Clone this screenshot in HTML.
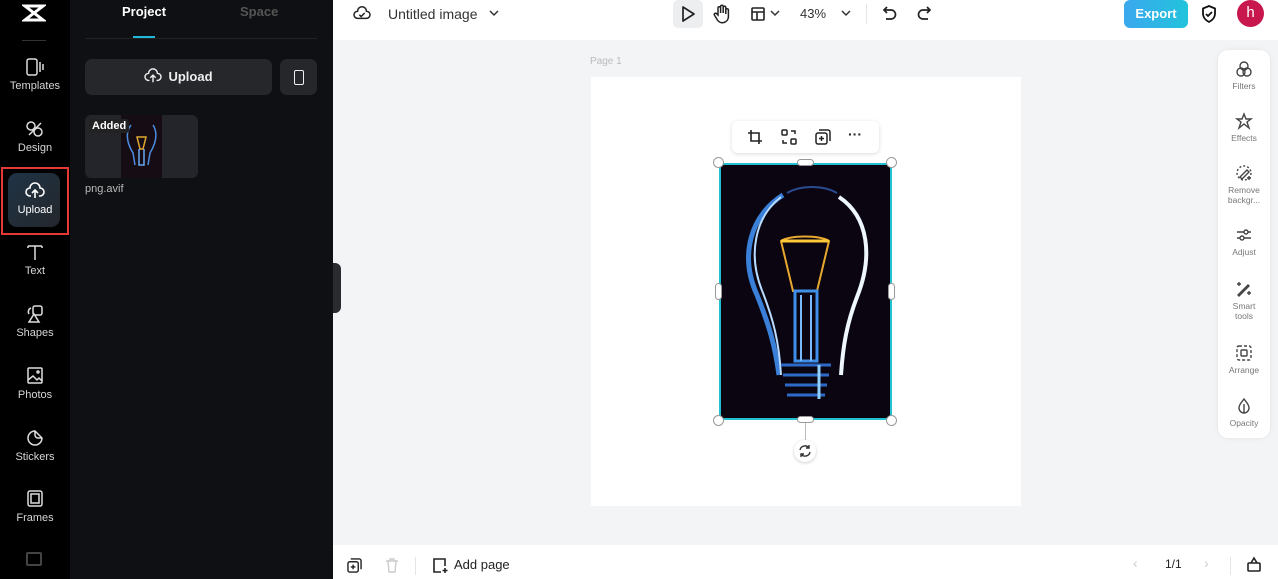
<!DOCTYPE html>
<html><head><meta charset="utf-8"><style>
*{box-sizing:border-box;margin:0;padding:0}
body{width:1278px;height:579px;overflow:hidden;font-family:"Liberation Sans",sans-serif;background:#f3f4f5;position:relative}
.rail{position:absolute;left:0;top:0;width:70px;height:579px;background:#000}
.panel{position:absolute;left:70px;top:0;width:263px;height:579px;background:#0f1013}
.ri{position:absolute;left:0;width:70px;text-align:center;color:#d6d6d8;font-size:11px}
.ri svg{display:block;margin:0 auto 4px}
.top{position:absolute;left:333px;top:0;right:0;height:40px;background:#fff}
.bot{position:absolute;left:333px;bottom:0;right:0;height:34px;background:#fff}
.rp{position:absolute;left:1218px;top:50px;width:52px;height:388px;background:#fff;border-radius:10px;box-shadow:0 0 4px rgba(0,0,0,.08)}
.rp div{position:absolute;left:0;width:52px;text-align:center;color:#777;font-size:8.5px;line-height:10px}
.rp svg{display:block;margin:0 auto 3px}
.h{position:absolute;width:11px;height:11px;border-radius:50%;background:#fff;border:1px solid #999}
</style></head><body>
<div class="rail">
 <svg style="position:absolute;left:22px;top:4px" width="24" height="18" viewBox="0 0 24 18"><path d="M3 2h18l-9 7zM3 16h18l-9-7z" fill="none" stroke="#fff" stroke-width="3"/></svg>
 <div style="position:absolute;left:22px;top:40px;width:24px;height:1px;background:#333"></div>
 <div class="ri" style="top:58px"><svg width="20" height="18" viewBox="0 0 20 18" fill="none" stroke="#ddd" stroke-width="1.5"><rect x="2" y="1" width="10" height="16" rx="2"/><path d="M15 4v10M18 6v6"/></svg>Templates</div>
 <div class="ri" style="top:120px"><svg width="20" height="18" viewBox="0 0 20 18" fill="none" stroke="#ddd" stroke-width="1.5"><circle cx="6" cy="6" r="4"/><circle cx="13" cy="12" r="4"/><path d="M4 15l12-12"/></svg>Design</div>
 <div style="position:absolute;left:1px;top:167px;width:68px;height:68px;border:2px solid #e53935"></div>
 <div style="position:absolute;left:8px;top:173px;width:52px;height:54px;border-radius:9px;background:linear-gradient(135deg,#1f3345,#24272c)"></div>
 <div class="ri" style="top:182px;color:#fff"><svg width="20" height="18" viewBox="0 0 20 18" fill="none" stroke="#fff" stroke-width="1.6"><path d="M6 14H5a4 4 0 0 1 0-8 5 5 0 0 1 10 0 4 4 0 0 1 0 8h-1M10 16V9M7 11l3-3 3 3"/></svg>Upload</div>
 <div class="ri" style="top:243px"><svg width="20" height="18" viewBox="0 0 20 18" fill="none" stroke="#ddd" stroke-width="1.5"><path d="M3 3h14M10 3v14M3 3v2M17 3v2"/></svg>Text</div>
 <div class="ri" style="top:305px"><svg width="20" height="18" viewBox="0 0 20 18" fill="none" stroke="#ddd" stroke-width="1.5"><rect x="8" y="1" width="9" height="9" rx="2"/><path d="M9 9l-5 8h10z"/><path d="M6 3a4 4 0 0 0-2 6"/></svg>Shapes</div>
 <div class="ri" style="top:367px"><svg width="20" height="18" viewBox="0 0 20 18" fill="none" stroke="#ddd" stroke-width="1.5"><rect x="3" y="1" width="14" height="15" rx="1"/><path d="M3 13l5-4 4 4 2-2 3 3"/><circle cx="13" cy="5" r="1"/></svg>Photos</div>
 <div class="ri" style="top:429px"><svg width="20" height="18" viewBox="0 0 20 18" fill="none" stroke="#ddd" stroke-width="1.5"><path d="M17 9A7 7 0 1 1 10 2l7 7zM10 2v4a3 3 0 0 0 3 3h4"/></svg>Stickers</div>
 <div class="ri" style="top:490px"><svg width="20" height="18" viewBox="0 0 20 18" fill="none" stroke="#ddd" stroke-width="1.5"><rect x="3" y="1" width="14" height="15" rx="2"/><rect x="6" y="4" width="8" height="9"/></svg>Frames</div>
 <div style="position:absolute;left:26px;top:552px;width:16px;height:14px;border:2px solid #444;border-radius:2px"></div>
</div>
<div class="panel">
 <div style="position:absolute;left:52px;top:4px;color:#fff;font-weight:bold;font-size:13px">Project</div>
 <div style="position:absolute;left:170px;top:4px;color:#555;font-weight:bold;font-size:13px">Space</div>
 <div style="position:absolute;left:63px;top:36px;width:22px;height:3px;background:#22b8d8"></div>
 <div style="position:absolute;left:15px;top:38px;width:232px;height:1px;background:#222"></div>
 <div style="position:absolute;left:15px;top:59px;width:187px;height:36px;border-radius:7px;background:#26272b;color:#eee;font-weight:bold;font-size:13px;line-height:36px;text-align:center"><svg style="vertical-align:-3px;margin-right:6px" width="18" height="16" viewBox="0 0 20 18" fill="none" stroke="#eee" stroke-width="1.6"><path d="M6 14H5a4 4 0 0 1 0-8 5 5 0 0 1 10 0 4 4 0 0 1 0 8h-1M10 16V9M7 11l3-3 3 3"/></svg>Upload</div>
 <div style="position:absolute;left:210px;top:59px;width:37px;height:36px;border-radius:7px;background:#26272b"><div style="position:absolute;left:14px;top:11px;width:10px;height:15px;border:1.5px solid #eee;border-radius:2px"></div></div>
 <div style="position:absolute;left:15px;top:115px;width:113px;height:63px;border-radius:6px;background:#24252a;overflow:hidden"><div style="position:absolute;left:36px;top:0;width:41px;height:63px;background:#150c14"></div>
 <svg style="position:absolute;left:36px;top:0" width="41" height="63" viewBox="0 0 41 63" fill="none" stroke="#4c8de0" stroke-width="1.5"><path d="M10 10C4 18 6 28 12 38l2 12M32 10c5 8 3 18-3 28l-2 12"/><path d="M16 22h9l-3 12h-3z" stroke="#e0a830"/><path d="M18 34v16h5V34" stroke="#69a8f0"/></svg>
 <div style="position:absolute;left:4px;top:4px;background:#222;color:#fff;font-weight:bold;font-size:11px;padding:1px 3px;border-radius:3px">Added</div></div>
 <div style="position:absolute;left:15px;top:183px;color:#bbb;font-size:11px">png.avif</div>
</div>
<div style="position:absolute;left:333px;top:263px;width:8px;height:50px;background:#2a2b2e;border-radius:0 6px 6px 0"></div>
<div class="top">
 <svg style="position:absolute;left:20px;top:5px" width="18" height="16" viewBox="0 0 20 18" fill="none" stroke="#222" stroke-width="1.7"><path d="M6 15H5a4 4 0 0 1 0-8 5 5 0 0 1 10 0 4 4 0 0 1 0 8H6M7 11l2 2 4-4"/></svg>
 <div style="position:absolute;left:55px;top:6px;font-size:14px;color:#333">Untitled image</div>
 <svg style="position:absolute;left:156px;top:9px" width="10" height="8" viewBox="0 0 10 8"><path d="M1 2l4 4 4-4" fill="none" stroke="#333" stroke-width="1.5"/></svg>
 <div style="position:absolute;left:340px;top:0;width:30px;height:28px;background:#eceef0;border-radius:5px"></div>
 <svg style="position:absolute;left:347px;top:5px" width="16" height="18" viewBox="0 0 16 18"><path d="M3 2l11 7-11 7z" fill="none" stroke="#222" stroke-width="1.7" stroke-linejoin="round"/></svg>
 <svg style="position:absolute;left:380px;top:4px" width="18" height="20" viewBox="0 0 18 20" fill="none" stroke="#222" stroke-width="1.5"><path d="M5 11V4a1.3 1.3 0 0 1 2.6 0v5V2.5a1.3 1.3 0 0 1 2.6 0V9V3.5a1.3 1.3 0 0 1 2.6 0V10V6a1.3 1.3 0 0 1 2.6 0v7a6 6 0 0 1-11 3l-3-5a1.3 1.3 0 0 1 2.3-1.2z"/></svg>
 <svg style="position:absolute;left:417px;top:6px" width="16" height="16" viewBox="0 0 16 16" fill="none" stroke="#222" stroke-width="1.6"><rect x="2" y="2" width="12" height="12" rx="1"/><path d="M2 6h12M7 6v8"/></svg>
 <svg style="position:absolute;left:437px;top:9px" width="10" height="8" viewBox="0 0 10 8"><path d="M1 2l4 4 4-4" fill="none" stroke="#333" stroke-width="1.5"/></svg>
 <div style="position:absolute;left:467px;top:6px;font-size:13px;color:#333">43%</div>
 <svg style="position:absolute;left:508px;top:9px" width="10" height="8" viewBox="0 0 10 8"><path d="M1 2l4 4 4-4" fill="none" stroke="#333" stroke-width="1.5"/></svg>
 <div style="position:absolute;left:533px;top:4px;width:1px;height:20px;background:#e5e5e5"></div>
 <svg style="position:absolute;left:549px;top:5px" width="16" height="18" viewBox="0 0 16 18" fill="none" stroke="#222" stroke-width="1.7"><path d="M5 2L2 5l3 3M2 5h7a4.5 4.5 0 0 1 0 9H4"/></svg>
 <svg style="position:absolute;left:583px;top:5px" width="16" height="18" viewBox="0 0 16 18" fill="none" stroke="#222" stroke-width="1.7"><path d="M11 2l3 3-3 3M14 5H7a4.5 4.5 0 0 0 0 9h5"/></svg>
 <div style="position:absolute;left:791px;top:0;width:64px;height:28px;border-radius:6px;background:linear-gradient(90deg,#3aa8ee,#22c3dc);color:#fff;font-weight:bold;font-size:13px;line-height:28px;text-align:center">Export</div>
 <svg style="position:absolute;left:867px;top:4px" width="18" height="20" viewBox="0 0 18 20" fill="none" stroke="#111" stroke-width="1.8"><path d="M9 2l6 2.5v5c0 4-3 7-6 8.5-3-1.5-6-4.5-6-8.5v-5z"/><path d="M6 10l2 2 4-4"/></svg>
 <div style="position:absolute;left:904px;top:0;width:27px;height:27px;border-radius:50%;background:#c8174d;color:#fff;font-size:15px;text-align:center;line-height:26px">h</div>
</div>
<div style="position:absolute;left:590px;top:56px;font-size:10px;color:#bbb">Page 1</div>
<div style="position:absolute;left:591px;top:77px;width:430px;height:429px;background:#fff"></div>
<div style="position:absolute;left:732px;top:121px;width:147px;height:32px;background:#fff;border-radius:6px;box-shadow:0 1px 4px rgba(0,0,0,.15)">
 <svg style="position:absolute;left:15px;top:8px" width="16" height="16" viewBox="0 0 16 16" fill="none" stroke="#222" stroke-width="1.6"><path d="M4 1v11h11M1 4h11v11"/></svg>
 <svg style="position:absolute;left:49px;top:8px" width="16" height="16" viewBox="0 0 16 16" fill="none" stroke="#222" stroke-width="1.5"><rect x="1" y="1" width="5" height="5" rx="1"/><rect x="10" y="10" width="5" height="5" rx="1"/><path d="M10 2h4v3M6 14H2v-3"/></svg>
 <svg style="position:absolute;left:83px;top:8px" width="16" height="16" viewBox="0 0 16 16" fill="none" stroke="#222" stroke-width="1.5"><rect x="1" y="4" width="11" height="11" rx="2"/><path d="M4 1h9a2 2 0 0 1 2 2v9M6.5 7v5M4 9.5h5"/></svg>
 <div style="position:absolute;left:116px;top:5px;font-size:14px;font-weight:bold;color:#222">···</div>
</div>
<div style="position:absolute;left:719px;top:163px;width:173px;height:257px;background:#0a0510;border:2px solid #22c0d0;overflow:hidden">
<svg width="169" height="253" viewBox="0 0 169 253" fill="none">
<path d="M62 30C30 50 18 90 36 130c12 30 18 50 22 80" stroke="#3a7fd8" stroke-width="5"/>
<path d="M60 32C34 52 26 90 42 128c10 26 16 48 18 82" stroke="#b9dcff" stroke-width="2"/>
<path d="M118 32c30 20 34 60 18 100-10 26-14 48-16 78" stroke="#eef6ff" stroke-width="4"/>
<path d="M66 28c14-8 36-8 50 0" stroke="#2a4a90" stroke-width="2"/>
<path d="M60 76c8-6 40-6 48 0l-12 50h-24z" stroke="#e8a830" stroke-width="2"/>
<path d="M60 76h48" stroke="#ffc838" stroke-width="3"/>
<path d="M74 126v70h22v-70z" stroke="#3f8fe8" stroke-width="3"/>
<path d="M80 130v66M90 130v66" stroke="#7ab8ff" stroke-width="2"/>
<path d="M60 200h50M62 210h46M64 220h42M66 230h38" stroke="#2d6ac8" stroke-width="3"/>
<path d="M98 200v34" stroke="#8fd0ff" stroke-width="3"/>
</svg></div>
<div class="h" style="left:713px;top:157px"></div><div class="h" style="left:886px;top:157px"></div>
<div class="h" style="left:713px;top:415px"></div><div class="h" style="left:886px;top:415px"></div>
<div style="position:absolute;left:797px;top:159px;width:17px;height:7px;background:#fff;border:1px solid #999;border-radius:4px"></div>
<div style="position:absolute;left:797px;top:416px;width:17px;height:7px;background:#fff;border:1px solid #999;border-radius:4px"></div>
<div style="position:absolute;left:715px;top:283px;width:7px;height:17px;background:#fff;border:1px solid #999;border-radius:4px"></div>
<div style="position:absolute;left:888px;top:283px;width:7px;height:17px;background:#fff;border:1px solid #999;border-radius:4px"></div>
<div style="position:absolute;left:805px;top:423px;width:1px;height:17px;background:#bbb"></div>
<div style="position:absolute;left:794px;top:440px;width:22px;height:22px;border-radius:50%;background:#fff;box-shadow:0 1px 3px rgba(0,0,0,.2)"><svg style="position:absolute;left:4px;top:4px" width="14" height="14" viewBox="0 0 14 14" fill="none" stroke="#333" stroke-width="1.4"><path d="M2 6a5 5 0 0 1 9-2M12 8a5 5 0 0 1-9 2M11 1v3H8M3 13v-3h3"/></svg></div>
<div class="rp">
 <div style="top:10px"><svg width="18" height="18" viewBox="0 0 18 18" fill="none" stroke="#444" stroke-width="1.4"><circle cx="9" cy="6" r="4"/><circle cx="6" cy="12" r="4"/><circle cx="12" cy="12" r="4"/></svg>Filters</div>
 <div style="top:62px"><svg width="18" height="18" viewBox="0 0 18 18" fill="none" stroke="#444" stroke-width="1.4"><path d="M9 2l2 5h5l-4 3 2 6-5-4-5 4 2-6-4-3h5z"/></svg>Effects</div>
 <div style="top:114px"><svg width="18" height="18" viewBox="0 0 18 18" fill="none" stroke="#444" stroke-width="1.4"><circle cx="9" cy="9" r="7" stroke-dasharray="2 2"/><path d="M5 13l7-7 2 2-7 7zM14 12v4M12 14h4"/></svg>Remove<br>backgr...</div>
 <div style="top:176px"><svg width="18" height="18" viewBox="0 0 18 18" fill="none" stroke="#444" stroke-width="1.4"><path d="M2 6h14M2 12h14"/><circle cx="11" cy="6" r="2" fill="#fff"/><circle cx="7" cy="12" r="2" fill="#fff"/></svg>Adjust</div>
 <div style="top:230px"><svg width="18" height="18" viewBox="0 0 18 18" fill="none" stroke="#444" stroke-width="1.4"><path d="M3 15L13 5l1 1L4 16zM4 2v4M2 4h4M14 11v4M12 13h4"/></svg>Smart<br>tools</div>
 <div style="top:294px"><svg width="18" height="18" viewBox="0 0 18 18" fill="none" stroke="#444" stroke-width="1.4"><rect x="2" y="2" width="14" height="14" rx="2" stroke-dasharray="3 2"/><rect x="6" y="6" width="6" height="6" rx="1"/></svg>Arrange</div>
 <div style="top:347px"><svg width="18" height="18" viewBox="0 0 18 18" fill="none" stroke="#444" stroke-width="1.4"><path d="M9 2c-3 4-5 6-5 9a5 5 0 0 0 10 0c0-3-2-5-5-9zM9 7v9"/></svg>Opacity</div>
</div>
<div class="bot">
 <svg style="position:absolute;left:14px;top:13px" width="15" height="15" viewBox="0 0 16 16" fill="none" stroke="#222" stroke-width="1.5"><rect x="1" y="4" width="11" height="11" rx="2"/><path d="M4 1h9a2 2 0 0 1 2 2v9M6.5 7v5M4 9.5h5"/></svg>
 <svg style="position:absolute;left:52px;top:13px" width="14" height="15" viewBox="0 0 14 15" fill="none" stroke="#ccc" stroke-width="1.4"><path d="M1 3h12M3 3l1 11h6l1-11M5 3V1h4v2"/></svg>
 <div style="position:absolute;left:82px;top:12px;width:1px;height:18px;background:#e5e5e5"></div>
 <svg style="position:absolute;left:99px;top:12px" width="17" height="17" viewBox="0 0 17 17" fill="none" stroke="#222" stroke-width="1.6"><path d="M9 15H2V2h11v7M13 11v5M10.5 13.5h5"/></svg>
 <div style="position:absolute;left:121px;top:12px;font-size:13px;color:#222">Add page</div>
 <div style="position:absolute;left:800px;top:10px;font-size:14px;color:#ccc">‹</div>
 <div style="position:absolute;left:832px;top:12px;font-size:12px;color:#222">1/1</div>
 <div style="position:absolute;left:871px;top:10px;font-size:14px;color:#ccc">›</div>
 <div style="position:absolute;left:897px;top:12px;width:1px;height:18px;background:#e5e5e5"></div>
 <svg style="position:absolute;left:913px;top:10px" width="16" height="18" viewBox="0 0 16 18" fill="none" stroke="#222" stroke-width="1.6"><rect x="2" y="8" width="12" height="8" rx="1"/><path d="M5 8l3-5 3 5"/></svg>
</div>
</body></html>
